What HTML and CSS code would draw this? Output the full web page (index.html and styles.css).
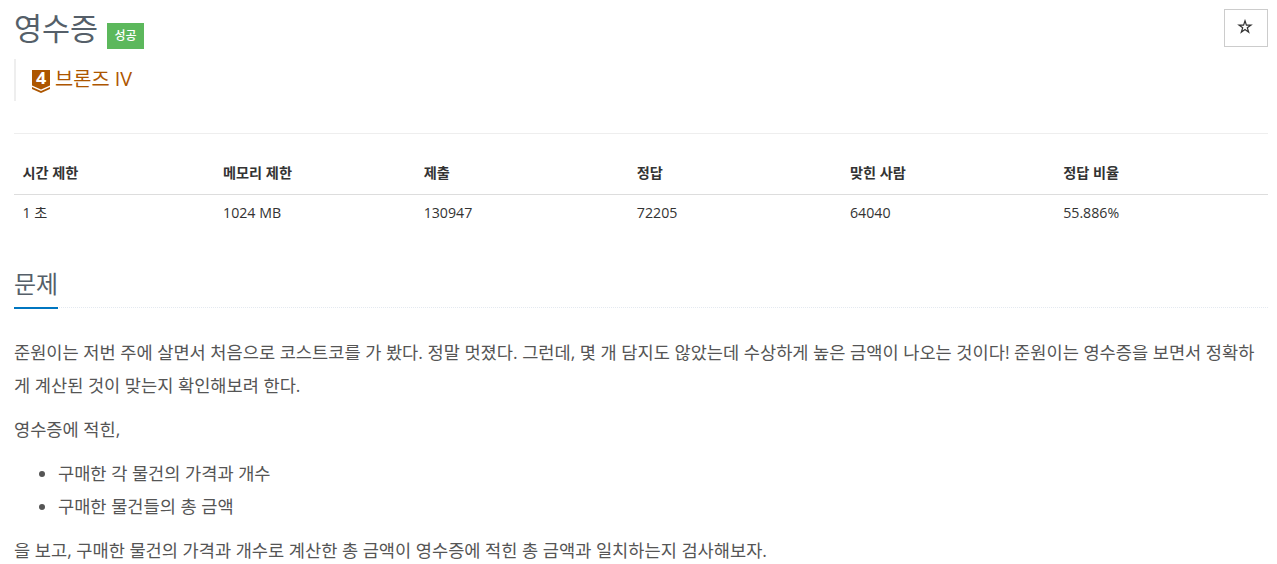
FILE: index.html
```html
<!DOCTYPE html>
<html lang="ko">
<head>
<meta charset="utf-8">
<title>영수증</title>
<link rel="stylesheet" href="styles.css">
</head>
<body>
<main class="page">
  <header class="head">
    <div class="title-row"><h1 class="title">영수증</h1><span class="label">성공</span></div>
    <button class="star" aria-label="즐겨찾기"><svg width="16" height="16" viewBox="0 0 16 16"><path d="M8 1.8 9.4 6.1H14L10.3 8.8 11.7 13.2 8 10.6 4.3 13.2 5.7 8.8 2 6.1H6.6Z" fill="none" stroke="#333" stroke-width="1.2"/></svg></button>
  </header>
  <blockquote class="tier">
    <svg class="tier-icon" width="18" height="24" viewBox="0 0 18 24"><path d="M0 0H18V15.5L9 19.5 0 15.5Z" fill="#ad5600"/><path d="M0 17 9 21 18 17V18.9L9 23 0 18.9Z" fill="#ad5600"/><text x="9" y="14.4" text-anchor="middle" textLength="10.2" lengthAdjust="spacingAndGlyphs" class="tier-num">4</text></svg>
    <span>브론즈 IV</span>
  </blockquote>
  <table class="info">
    <colgroup><col class="a"><col class="a"><col class="b"><col class="b"><col class="b"><col class="b"></colgroup>
    <thead><tr><th>시간 제한</th><th>메모리 제한</th><th>제출</th><th>정답</th><th>맞힌 사람</th><th>정답 비율</th></tr></thead>
    <tbody><tr><td>1 초</td><td>1024 MB</td><td>130947</td><td>72205</td><td>64040</td><td>55.886%</td></tr></tbody>
  </table>
  <div class="headline"><h2>문제</h2></div>
  <section class="text">
    <p>준원이는 저번 주에 살면서 처음으로 코스트코를 가 봤다. 정말 멋졌다. 그런데, 몇 개 담지도 않았는데 수상하게 높은 금액이 나오는 것이다! 준원이는 영수증을 보면서 정확하게 계산된 것이 맞는지 확인해보려 한다.</p>
    <p>영수증에 적힌,</p>
    <ul><li>구매한 각 물건의 가격과 개수</li><li>구매한 물건들의 총 금액</li></ul>
    <p>을 보고, 구매한 물건의 가격과 개수로 계산한 총 금액이 영수증에 적힌 총 금액과 일치하는지 검사해보자.</p>
  </section>
</main>
</body>
</html>
```
FILE: styles.css
```css
* { box-sizing: border-box; }
body { margin: 0; background: #fff; color: #333; font-family: "Open Sans", "Noto Sans CJK KR", sans-serif; font-size: 14.2px; overflow: hidden; }
.page { padding: 9px 9px 0 14px; }
.head { display: flex; justify-content: space-between; height: 50px; }
.title-row { display: flex; align-items: flex-start; }
.title { margin: 0; width: 84px; font-size: 30.5px; line-height: 39px; font-weight: 400; color: #555f69; white-space: nowrap; }
.label { margin: 14px 0 0 9px; width: 37px; height: 26px; background: #5cb85c; color: #fff; font-size: 12px; font-weight: 500; line-height: 25px; text-align: center; }
.star { width: 44px; height: 38px; padding: 0 2px 3px 0; border: 1px solid #ccc; background: #fff; display: flex; align-items: center; justify-content: center; }
.tier { margin: 0 0 32px; height: 42px; padding-left: 16px; border-left: 2px solid #eee; display: flex; align-items: flex-start; font-size: 19.8px; line-height: 39px; color: #ad5600; gap: 5px; }
.tier-icon { margin-top: 11px; overflow: visible; }
.tier-num { font: 700 16px/1 "Open Sans", sans-serif; fill: #fff; }
.info { width: 100%; border-collapse: collapse; table-layout: fixed; border-top: 1px solid #eee; }
.info .a { width: 16%; }
.info .b { width: 17%; }
.info th, .info td { text-align: left; padding: 0 8px 0 8.4px; line-height: 20px; }
.info th { padding-top: 29px; padding-bottom: 11px; border-bottom: 1px solid #ddd; }
.info td { padding-top: 8px; padding-bottom: 8px; }
.headline { margin-top: 32px; height: 45px; border-bottom: 1px dotted #e4e9f0; display: flex; }
.headline h2 { margin: 0; height: 46px; font-size: 24px; font-weight: 400; line-height: 41px; color: #555f69; border-bottom: 2px solid #0076c0; }
.text { margin-top: 28px; font-size: 17.6px; line-height: 33px; color: #555; }
.text p { margin: 0 0 11px; word-break: break-all; }
.text ul { margin: 0 0 11px; padding-left: 44px; }
```
